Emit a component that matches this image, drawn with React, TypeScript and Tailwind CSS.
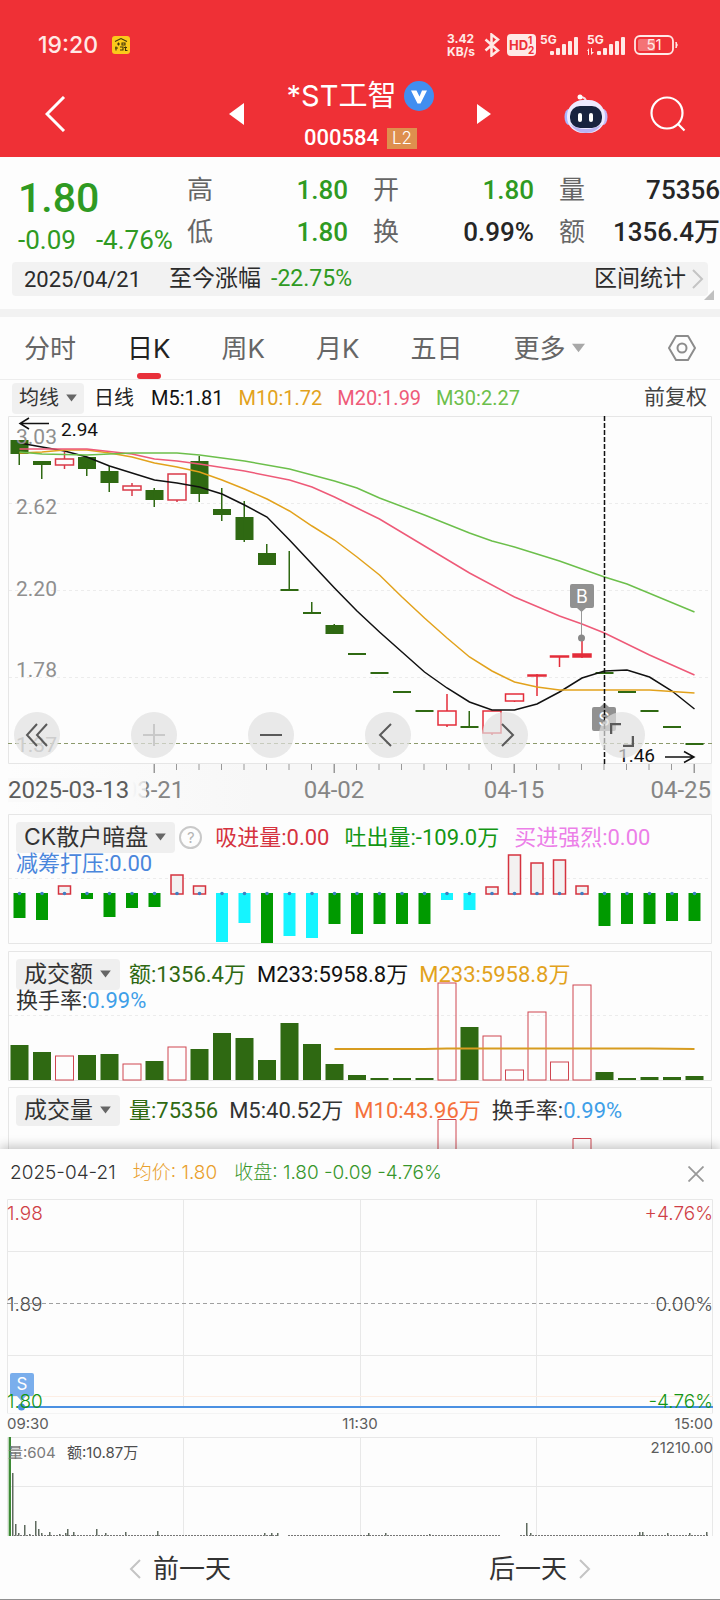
import { useState } from 'react';
import type { ReactNode } from 'react';

const STEP = 22.5;
const cx = (i: number) => 19.5 + STEP * i;

// [direction, body top, body bottom, high, low]
type Candle = ['u' | 'd', number, number, number, number];
const candles: Candle[] = [
  ['d', 24, 38, 24, 49], ['d', 45, 49, 45, 63], ['u', 43, 49, 36, 53], ['d', 41, 53, 41, 60],
  ['d', 55, 67, 50, 76], ['u', 70, 74, 67, 80], ['d', 74, 84, 72, 91], ['u', 58, 84, 58, 86],
  ['d', 45, 78, 40, 86], ['d', 93, 99, 72, 105], ['d', 101, 124, 85, 126], ['d', 137, 149, 128, 149],
  ['d', 173, 175, 135, 174], ['d', 196, 198, 186, 197], ['d', 209, 218, 208, 218], ['d', 237, 239, 238, 238],
  ['d', 256, 258, 257, 257], ['d', 275, 277, 276, 276], ['d', 294, 296, 295, 295], ['u', 295, 309, 278, 311],
  ['d', 310, 312, 295, 311], ['u', 295, 317, 295, 319], ['u', 278, 285, 278, 286], ['u', 259, 260, 258, 280],
  ['u', 240, 241, 240, 251], ['u', 238, 241, 222, 242], ['d', 256, 258, 257, 257], ['d', 275, 277, 276, 276],
  ['d', 294, 296, 295, 295], ['d', 310, 312, 311, 311], ['d', 327, 329, 328, 328],
];

// [index, y]
type Point = [number, number];
const averages: { color: string; points: Point[] }[] = [
  {
    color: '#111111',
    points: [[0, 27], [1, 31], [2, 35], [3, 41], [4, 50], [6, 64], [7, 67], [8, 71], [9, 78], [10, 89], [11, 101], [12, 124], [14, 172],
      [15, 195], [16, 216], [17, 236], [18, 256], [19, 272], [20, 286], [21, 294], [22, 294], [23, 288], [24, 276], [25, 262],
      [26, 255], [27, 254], [28, 261], [29, 275], [30, 293]],
  },
  {
    color: '#e2a21c',
    points: [[0, 37], [1, 36], [2, 34], [3, 34], [4, 37], [5, 41], [6, 47], [7, 51], [8, 56], [9, 64], [10, 73], [11, 83], [12, 95],
      [13, 110], [14, 124], [15, 141], [16, 159], [17, 181], [18, 202], [19, 222], [20, 241], [21, 255], [22, 266], [23, 271],
      [24, 274], [28, 274], [30, 277]],
  },
  {
    color: '#ee5a78',
    points: [[0, 33], [3, 33], [5, 38], [6, 43], [7, 45], [8, 48], [10, 55], [12, 64], [13, 71], [14, 81], [15, 92], [16, 103],
      [18, 130], [20, 157], [22, 181], [24, 200], [25, 208], [26, 217], [28, 239], [30, 259]],
  },
  {
    color: '#6cbf4b',
    points: [[0, 36], [1, 38], [3, 39], [5, 37], [7, 37], [8, 39], [10, 45], [12, 53], [13, 59], [14, 65], [15, 72], [16, 82],
      [18, 99], [20, 117], [21, 125], [22, 131], [24, 145], [26, 161], [27, 168], [30, 196]],
  },
];

const flows: ['g' | 'r' | 'c', number][] = [
  ['g', 104], ['g', 106], ['r', 72], ['g', 85], ['g', 103], ['g', 94], ['g', 93], ['r', 61], ['r', 72], ['c', 128],
  ['c', 109], ['g', 129], ['c', 122], ['c', 124], ['g', 110], ['g', 120], ['g', 110], ['g', 110], ['g', 110], ['c', 86],
  ['c', 96], ['r', 73], ['r', 41], ['r', 49], ['r', 46], ['r', 72], ['g', 112], ['g', 110], ['g', 110], ['g', 107], ['g', 107],
];

const turnover: ['u' | 'd', number][] = [
  ['d', 94], ['d', 101], ['u', 105], ['d', 104], ['d', 103], ['u', 113], ['d', 110], ['u', 96], ['d', 98], ['d', 82],
  ['d', 87], ['d', 109], ['d', 72], ['d', 93], ['d', 113], ['d', 124], ['d', 127], ['d', 127], ['d', 127], ['u', 32],
  ['d', 76], ['u', 85], ['u', 119], ['u', 61], ['u', 111], ['u', 34], ['d', 121], ['d', 127], ['d', 126], ['d', 126], ['d', 125],
];

const minuteSpikes: Point[] = [
  [13, 63], [16, 12], [19, 3], [25, 11], [30, 2], [36, 15], [39, 7], [42, 3], [50, 4], [60, 2], [66, 3], [68, 7], [74, 4],
  [97, 7], [106, 3], [126, 4], [158, 5], [265, 3], [272, 3], [278, 3], [369, 3], [386, 3], [430, 2], [527, 13], [531, 3],
  [640, 4], [643, 4], [668, 3], [690, 3], [707, 4],
];

const DIN = "font-['Roboto','Noto_Sans_CJK_SC',sans-serif]";
const UI = "font-['Inter','Noto_Sans_CJK_SC',sans-serif]";

function Caret({ className }: { className: string }) {
  return <svg viewBox="0 0 12 9" className={className} aria-hidden="true"><path d="M0 0.5h12L6 8.5z" fill="currentColor" /></svg>;
}

function Chevron({ dir, className }: { dir: 'left' | 'right'; className: string }) {
  return (
    <svg viewBox="0 0 12 20" className={className} fill="none" stroke="currentColor" strokeWidth="2" aria-hidden="true">
      <path d={dir === 'left' ? 'M11 1L2 10l9 9' : 'M1 1l9 9-9 9'} />
    </svg>
  );
}

function Signal({ data }: { data?: boolean }) {
  return (
    <svg viewBox="0 0 40 28" className="h-7 w-10" fill="#ffe9e6" aria-hidden="true">
      <text x="0" y="13" className="font-['Inter',sans-serif] text-[12px] font-bold">5G</text>
      {data && <path d="M0 20l2-3v7h-1v-4zM4 17h1v4h2l-3 3z" />}
      <rect x="10" y="20" width="4" height="4" rx="1" />
      <rect x="16" y="17" width="4" height="7" rx="1" />
      <rect x="22" y="13" width="4" height="11" rx="1" />
      <rect x="28" y="10" width="4" height="14" rx="1" />
      <rect x="34" y="6" width="4" height="18" rx="1" />
    </svg>
  );
}

function StatusBar() {
  return (
    <div className="flex h-[68px] items-center pt-[22px] pr-[41px] pl-[38px] text-[#ffe9e6]">
      <span className="text-[23px] font-medium">19:20</span>
      <svg viewBox="0 0 18 18" className="ml-[14px] size-[18px]" aria-hidden="true">
        <rect width="18" height="18" rx="3" fill="#fbc91b" />
        <path d="M3 5.500l6-3 6 3M5 8h3M6.500 6.500v3M10 7h3v2h-3zM3 12h3M4 10.500v4M8 11h3v3H8M12 11.500h3M13.500 10.500v4h2" fill="none" stroke="#43360a" strokeWidth="1.100" />
      </svg>
      <span className="ml-auto w-[34px] text-[12px] leading-[13px] font-bold">3.42<br />KB/s</span>
      <svg viewBox="0 0 16 24" className="ml-[3px] h-6 w-4" fill="none" stroke="#ffe9e6" strokeWidth="2.500" aria-hidden="true">
        <path d="M1.500 6.500l12.500 11-6.500 5V1.500l6.500 5-12.500 11" />
      </svg>
      <svg viewBox="0 0 30 22" className="ml-[7px] h-[22px] w-[30px]" aria-hidden="true">
        <rect width="29" height="22" rx="4" fill="#ffe9e6" />
        <g fill="#ee3035" className="font-['Inter',sans-serif] font-bold">
          <text x="2" y="16" className="text-[13px]">HD</text>
          <text x="21" y="10" className="text-[10px]">1</text>
          <text x="21" y="20" className="text-[10px]">2</text>
        </g>
      </svg>
      <div className="ml-[3px] flex gap-[7px]">
        <Signal />
        <Signal data />
      </div>
      <svg viewBox="0 0 45 20" className="ml-[7px] h-5 w-[45px]" aria-hidden="true">
        <rect x="4" y="4" width="17" height="12" rx="2" fill="#f47375" />
        <rect x="1" y="1" width="38" height="18" rx="5" fill="none" stroke="#ffe9e6" strokeWidth="1.800" />
        <path d="M42 7q2.500 3 0 6z" fill="#ffe9e6" stroke="#ffe9e6" />
        <text x="20" y="15" textAnchor="middle" fill="#ffe9e6" className="font-['Inter',sans-serif] text-[15px]">51</text>
      </svg>
    </div>
  );
}

function Robot() {
  return (
    <svg viewBox="0 0 44 40" className="h-10 w-11" aria-hidden="true">
      <path d="M22 8q0-5-6-5" fill="none" stroke="#f4dfe6" strokeWidth="2" />
      <circle cx="16" cy="3" r="2.500" fill="#fff" />
      <ellipse cx="5" cy="23" rx="4.500" ry="8" fill="#a9b4ff" />
      <ellipse cx="39" cy="23" rx="4.500" ry="8" fill="#c3b8f7" />
      <rect x="3" y="6" width="38" height="33" rx="16" fill="#eeeaff" />
      <path d="M6 30q6 9 16 9t16-9q-6 5-16 5T6 30z" fill="#b9b5f3" />
      <rect x="6" y="12" width="32" height="22" rx="10" fill="#18233f" />
      <rect x="14" y="19" width="4" height="9" rx="2" fill="#fff" />
      <rect x="25" y="19" width="4" height="9" rx="2" fill="#fff" />
    </svg>
  );
}

function NavBar() {
  return (
    <div className="grid h-[89px] grid-cols-[1fr_auto_1fr] pt-[10px] text-white">
      <button aria-label="返回" className="flex h-[72px] items-center pl-[45px]">
        <svg viewBox="0 0 21 36" className="h-9 w-[21px]" fill="none" stroke="currentColor" strokeWidth="3"><path d="M19 1L2 18l17 17" /></svg>
      </button>
      <div className="flex h-[72px] w-[262px] items-center justify-between">
        <button aria-label="上一只">
          <svg viewBox="0 0 15 22" className="h-[22px] w-[15px]" fill="currentColor"><path d="M15 0v22L0 11z" /></svg>
        </button>
        <div className="flex flex-col items-center gap-3">
          <div className="flex items-center gap-2">
            <h1 className="text-[29px] leading-9 whitespace-nowrap">*ST工智</h1>
            <svg viewBox="0 0 30 30" className="size-[30px]" aria-hidden="true">
              <circle cx="15" cy="15" r="15" fill="#418ef0" />
              <path d="M7 9.500h5.500l3 6 2.500-6h5l-6.500 13h-3z" fill="#fff" />
            </svg>
          </div>
          <div className="flex items-center gap-2">
            <span className={`${DIN} text-[22px] leading-6 font-medium`}>000584</span>
            <span className="w-[30px] bg-[#de8f4e] text-center text-[17px] leading-[21px] font-light">L2</span>
          </div>
        </div>
        <button aria-label="下一只">
          <svg viewBox="0 0 14 20" className="h-5 w-[14px]" fill="currentColor"><path d="M0 0v20l14-10z" /></svg>
        </button>
      </div>
      <div className="flex h-[72px] items-center justify-end gap-[42px] pr-[34px]">
        <button aria-label="智能助手"><Robot /></button>
        <button aria-label="搜索">
          <svg viewBox="0 0 36 36" className="size-9" fill="none" stroke="currentColor" strokeWidth="2.200"><circle cx="17" cy="17" r="15.500" /><path d="M27.500 27.500l7 7" /></svg>
        </button>
      </div>
    </div>
  );
}

const quotes = [
  { label: '高', value: '1.80', tone: 'text-[#2f9a22]' },
  { label: '开', value: '1.80', tone: 'text-[#2f9a22]' },
  { label: '量', value: '75356', tone: 'text-[#262626]' },
  { label: '低', value: '1.80', tone: 'text-[#2f9a22]' },
  { label: '换', value: '0.99%', tone: 'text-[#262626]' },
  { label: '额', value: '1356.4万', tone: 'text-[#262626]' },
];

function QuotePanel() {
  return (
    <section className={`${DIN} relative border-b-8 border-[#f2f2f2] pt-[13px] pb-[13px]`}>
      <div className="flex">
        <div className="w-[187px] shrink-0 pt-[6px] pl-[18px] text-[#2f9a22]">
          <div className="text-[41px] leading-[44px] font-medium">1.80</div>
          <div className="mt-[6px] flex gap-5 text-[26px] leading-7">
            <span>-0.09</span>
            <span>-4.76%</span>
          </div>
        </div>
        <dl className="grid flex-1 grid-cols-3 gap-x-[25px] text-[26px] leading-[41px]">
          {quotes.map((q) => (
            <div key={q.label} className="flex justify-between whitespace-nowrap">
              <dt className="text-[#666666]">{q.label}</dt>
              <dd className={`font-medium ${q.tone}`}>{q.value}</dd>
            </div>
          ))}
        </dl>
      </div>
      <div className="mx-3 mt-2 flex h-[34px] items-center rounded bg-[#f2f2f2] pr-1 pl-3 text-[23px] text-[#2b2b2b]">
        <span className="text-[22px]">2025/04/21</span>
        <span className="ml-7">至今涨幅</span>
        <span className="ml-[10px] text-[#2f9a22]">-22.75%</span>
        <button className="ml-auto flex items-center gap-[6px]">
          区间统计
          <Chevron dir="right" className="h-5 w-3 text-[#c4c4c4]" />
        </button>
      </div>
      <svg viewBox="0 0 10 10" className="absolute right-[6px] bottom-[9px] size-[10px]" aria-hidden="true"><path d="M10 0v10H0z" fill="#c0c0c0" /></svg>
    </section>
  );
}

const tabs = ['分时', '日K', '周K', '月K', '五日'];

function PeriodTabs() {
  const [active, setActive] = useState('日K');
  return (
    <nav className="flex h-[63px] items-center gap-[51px] border-b border-[#ededed] px-6 text-[26px] text-[#666666]">
      {tabs.map((t) => (
        <button key={t} onClick={() => setActive(t)}
          className={t === active ? 'relative h-full whitespace-nowrap text-[#222222]' : 'h-full whitespace-nowrap'}>
          {t}
          {t === active && <span className="absolute bottom-0 left-1/2 h-[6px] w-6 -translate-x-1/2 rounded-full bg-[#e8303a]" />}
        </button>
      ))}
      <button className="flex h-full items-center gap-[6px] whitespace-nowrap">更多<Caret className="h-[10px] w-[13px] text-[#a8a8a8]" /></button>
      <button aria-label="设置" className="ml-auto">
        <svg viewBox="0 0 28 28" className="size-7" fill="none" stroke="#8c8c8c" strokeWidth="2"><path d="M8 2h12l7 12-7 12H8L1 14z" strokeLinejoin="round" /><circle cx="14" cy="14" r="4.500" /></svg>
      </button>
    </nav>
  );
}

function AverageLegend() {
  return (
    <div className={`${DIN} flex h-9 items-center pr-[13px] pl-3 text-[20px] whitespace-nowrap`}>
      <button className="flex h-[31px] items-center gap-[7px] rounded bg-[#f0f0f0] px-[7px] text-[20px] text-[#333333]">
        均线<Caret className="h-2 w-[11px] text-[#666666]" />
      </button>
      <span className="ml-[10px] text-[#222222]">日线</span>
      <div className="ml-[17px] flex gap-[15px] text-[20px]">
        <span className="text-[#111111]">M5:1.81</span>
        <span className="text-[#e2a21c]">M10:1.72</span>
        <span className="text-[#ee5a78]">M20:1.99</span>
        <span className="text-[#6cbf4b]">M30:2.27</span>
      </div>
      <button className="ml-auto text-[21px] text-[#444444]">前复权</button>
    </div>
  );
}

function RoundButton({ label, children }: { label: string; children: ReactNode }) {
  return (
    <button aria-label={label} className="flex size-[46px] items-center justify-center rounded-full bg-[#e0e0e0]/70">
      <svg viewBox="0 0 24 24" className="size-6" fill="none" stroke="#5a5a5a" strokeWidth="2">{children}</svg>
    </button>
  );
}

function KLineChart() {
  return (
    <section className="relative">
      <svg viewBox="0 0 720 398" className={`${DIN} block h-auto w-full`} role="img" aria-label="日K线图">
        <defs>
          <linearGradient id="axisFade">
            <stop offset="0" stopColor="#fdfdfd" />
            <stop offset="1" stopColor="#f7f7f7" />
          </linearGradient>
          <linearGradient id="dateFade">
            <stop offset="0.900" stopColor="#fafafa" />
            <stop offset="1" stopColor="#f9f9f9" stopOpacity="0.700" />
          </linearGradient>
        </defs>
        <rect x="8" y="348" width="248" height="50" fill="url(#axisFade)" />
        <rect x="256" y="348" width="456" height="50" fill="#f7f7f7" />
        <path d="M8.500 347.500V.5h703v347z" fill="none" stroke="#e6e6e6" />
        <path d="M9 87.500h702M9 174.500h702M9 261.500h702" stroke="#ececec" strokeDasharray="3 3" />
        <path d="M8 327.500h704" stroke="#8c9a6c" strokeDasharray="4 3" />

        {candles.map(([dir, top, bottom, high, low], i) => {
          const x = cx(i);
          if (dir === 'd') {
            return (
              <g key={i} fill="#2f6912">
                <rect x={x - 9} y={top} width="18" height={bottom - top} />
                {low > high && <rect x={x - 1} y={high} width="1.500" height={low - high} />}
              </g>
            );
          }
          return (
            <g key={i} fill="none" stroke={i < 19 ? '#d93a48' : '#e32d3a'} strokeWidth="1.500">
              <path d={`M${x} ${high}V${top}M${x} ${bottom}V${low}`} />
              <rect x={x - 9} y={top} width="18" height={bottom - top} fill={i === 25 ? '#e32d3a' : 'none'} />
            </g>
          );
        })}
        {averages.map((a) => (
          <polyline key={a.color} points={a.points.map(([i, y]) => `${cx(i)},${y}`).join(' ')} fill="none" stroke={a.color} strokeWidth="1.500" />
        ))}

        <g fill="#8f8f8f" className="text-[21px]">
          <text x="16" y="28">3.03</text>
          <text x="16" y="98">2.62</text>
          <text x="16" y="180">2.20</text>
          <text x="16" y="261">1.78</text>
          <text x="16" y="336" fill="#a0a0a0">1.37</text>
        </g>
        <path d="M49 7.500H20M29 2l-9 5.500 9 5.500" fill="none" stroke="#111" strokeWidth="1.500" />
        <text x="61" y="20" fill="#111" className="text-[19px]">2.94</text>

        <path d="M581.500 193v28" stroke="#999" />
        <circle cx="581.500" cy="222" r="3.500" fill="#888" />
        <path d="M572 168h20q2 0 2 2v20q0 2-2 2h-6l-4.500 4-4.500-4h-5q-2 0-2-2v-20q0-2 2-2z" fill="#919191" />
        <text x="582" y="187" textAnchor="middle" fill="#fff" className="font-['Inter',sans-serif] text-[18px]">B</text>
        <path d="M594 291h6l4.500-4 4.500 4h5q2 0 2 2v20q0 2-2 2h-20q-2 0-2-2v-20q0-2 2-2z" fill="#919191" />
        <text x="604" y="310" textAnchor="middle" fill="#fff" className="font-['Inter',sans-serif] text-[18px]">S</text>
        <path d="M604.500 0v348" stroke="#111" strokeWidth="1.500" strokeDasharray="5 2" />
        <text x="618" y="346" fill="#111" className="text-[19px]">1.46</text>
        <path d="M665 341h29M684 335.500l10 5.500-10 5.500" fill="none" stroke="#111" strokeWidth="1.500" />

        {candles.map((_, i) => i >= 6 && (
          <rect key={i} x={cx(i) - 1} y="348" width={[6, 14, 22, 30].includes(i) ? 1.5 : 1} height={[6, 14, 22, 30].includes(i) ? 9 : 6} fill="#999" />
        ))}
        <g fill="#858585" className="text-[24px]">
          <text x="154" y="382" textAnchor="middle">03-21</text>
          <rect x="8" y="362" width="138" height="24" fill="url(#dateFade)" />
          <text x="8" y="382" fill="#5c5c5c">2025-03-13</text>
          <text x="334" y="382" textAnchor="middle">04-02</text>
          <text x="514" y="382" textAnchor="middle">04-15</text>
          <text x="711" y="382" textAnchor="end">04-25</text>
        </g>
      </svg>
      <div className="absolute top-[296px] right-[75px] left-[14px] flex justify-between">
        <RoundButton label="最早"><path d="M12 1L2 12l10 11M22 1L12 12l10 11" /></RoundButton>
        <RoundButton label="放大"><path d="M1 12h22M12 1v22" stroke="#c9c9c9" /></RoundButton>
        <RoundButton label="缩小"><path d="M1 12h22" /></RoundButton>
        <RoundButton label="左移"><path d="M15 1L4 12l11 11" /></RoundButton>
        <RoundButton label="右移"><path d="M9 1l11 11L9 23" /></RoundButton>
        <RoundButton label="全屏"><path d="M1 11V1h10M23 13v10H13" strokeWidth="2.500" /></RoundButton>
      </div>
    </section>
  );
}

function Indicator({ name, help, chart, children, extra }: { name: string; help?: boolean; chart: ReactNode; children: ReactNode; extra?: ReactNode }) {
  return (
    <section className="relative">
      {chart}
      <div className={`${DIN} absolute inset-x-0 top-0 pt-2 pl-4 text-[22px] whitespace-nowrap`}>
        <div className="flex h-[30px] items-center">
          <button className={`${UI} flex h-[31px] items-center gap-[7px] rounded bg-[#efefef] pr-[9px] pl-2 text-[23px] text-[#333333]`}>
            {name}<Caret className="h-2 w-[11px] text-[#666666]" />
          </button>
          {help && (
            <button aria-label="说明" className={`${UI} ml-1 size-[23px] rounded-full border-2 border-[#c9c9c9] text-center text-[15px] leading-[19px] text-[#b5b5b5]`}>?</button>
          )}
          <div className={help ? 'ml-[13px] flex gap-[15px]' : 'ml-[9px] flex gap-[11px]'}>{children}</div>
        </div>
        <div className="leading-[24px]">{extra}</div>
      </div>
    </section>
  );
}

function PanelFrame({ bottom }: { bottom: number }) {
  return <path d={`M8.500 ${bottom}V.5h703V${bottom}z`} fill="none" stroke="#e6e6e6" />;
}

const FLOW_COLORS = { g: '#009a00', c: '#15f4ff', r: '#d5333f' };

function FlowChart() {
  return (
    <svg viewBox="0 0 720 137" className="block h-auto w-full" role="img" aria-label="CK散户暗盘">
      <PanelFrame bottom={129.5} />
      <path d="M9 64.500h702" stroke="#ececec" strokeDasharray="3 3" />
      {flows.map(([kind, y], i) => {
        const x = cx(i) - 6;
        return (
          <g key={i}>
            {kind === 'r'
              ? <rect x={x} y={y} width="12" height={80 - y} fill="#f3f1f1" stroke={FLOW_COLORS.r} strokeWidth="1.500" />
              : <rect x={x} y="79" width="12" height={y - 79} fill={FLOW_COLORS[kind]} />}
            <circle cx={cx(i)} cy="79.500" r="1.800" fill="#3d7fc4" />
          </g>
        );
      })}
    </svg>
  );
}

function VolumeBars({ data, baseline }: { data: ['u' | 'd', number][]; baseline: number }) {
  return data.map(([dir, y], i) => dir === 'd'
    ? <rect key={i} x={cx(i) - 9} y={y} width="18" height={baseline - y} fill="#2f6912" />
    : <rect key={i} x={cx(i) - 9} y={y} width="18" height={baseline - y} fill="none" stroke="#cf4651" />);
}

function TurnoverChart() {
  return (
    <svg viewBox="0 0 720 136" className="block h-auto w-full" role="img" aria-label="成交额">
      <PanelFrame bottom={129.5} />
      <path d="M9 64.500h702" stroke="#ececec" strokeDasharray="3 3" />
      <VolumeBars data={turnover} baseline={129} />
      <path d={`M${cx(14)} 98H${cx(18)}L${cx(19)} 97.500H${cx(28)}L${cx(30)} 98`} fill="none" stroke="#d79c20" strokeWidth="2" />
    </svg>
  );
}

function VolumeChart() {
  return (
    <svg viewBox="0 0 720 62" className="block h-auto w-full" role="img" aria-label="成交量">
      <PanelFrame bottom={70} />
      <path d={`M${cx(19) - 9} 70V32.500h18V70M${cx(25) - 9} 70V51.500h18V70`} fill="none" stroke="#cf4651" />
    </svg>
  );
}

function IntradayChart() {
  return (
    <svg viewBox="0 0 720 337" className={`${UI} block h-auto w-full`} role="img" aria-label="分时图">
      <path d="M7.500 214V.5h705V214M7 52.500h706M7 156.500h706M183.500 1v208M360.500 1v208M536.500 1v208" fill="none" stroke="#e8e8e8" />
      <path d="M7 214.500h706" stroke="#f4f4f4" />
      <path d="M7 104.500h706" stroke="#a0a0a0" strokeDasharray="4 3" />
      <path d="M7 197.500h706" stroke="#fdeee4" />
      <path d="M12 174h20q2 0 2 2v19q0 2-2 2h-6l-4.500 5-4.500-5h-5q-2 0-2-2v-19q0-2 2-2z" fill="#7aaeec" />
      <text x="22" y="191" textAnchor="middle" fill="#fff" className="text-[17px]">S</text>
      <circle cx="21.500" cy="208" r="3.500" fill="#4a90e2" />
      <path d="M20 208h693" stroke="#4a90e2" strokeWidth="2" />
      <g className="text-[19px] font-light">
        <text x="7" y="21" fill="#cf3f46">1.98</text>
        <text x="713" y="21" textAnchor="end" fill="#cf3f46">+4.76%</text>
        <text x="7" y="112" fill="#4d4d4d">1.89</text>
        <text x="713" y="112" textAnchor="end" fill="#4d4d4d">0.00%</text>
        <text x="7" y="209" fill="#149614">1.80</text>
        <text x="713" y="209" textAnchor="end" fill="#149614">-4.76%</text>
      </g>
      <g className="text-[15px]" fill="#5c5c5c">
        <text x="7" y="230">09:30</text>
        <text x="360" y="230" textAnchor="middle">11:30</text>
        <text x="713" y="230" textAnchor="end">15:00</text>
      </g>

      <path d="M7.500 337v-98.500h705V337M7 287.500h706M183.500 239v98M360.500 239v98M536.500 239v98" fill="none" stroke="#e8e8e8" />
      <rect x="8" y="238" width="1" height="99" fill="#b9d8b4" />
      <rect x="9" y="238" width="2" height="99" fill="#3d8a35" />
      {minuteSpikes.map(([x, h]) => <rect key={x} x={x - 1} y={337 - h} width="1.500" height={h} fill="#5f6b5f" />)}
      <path d="M14 336.500h264M288 336.500h212M520 336.500h188" stroke="#777" strokeDasharray="2 1" />
      <g className="text-[15px]">
        <text x="8" y="259" fill="#7a7a7a">量:604</text>
        <text x="67" y="259" fill="#4d4d4d">额:10.87万</text>
        <text x="713" y="254" textAnchor="end" fill="#5c5c5c">21210.00</text>
      </g>
    </svg>
  );
}

function DaySheet() {
  return (
    <section className="relative border-b border-[#8f8f8f] bg-[#fdfdfd] shadow-[0_-3px_10px_rgba(0,0,0,0.22)]">
      <header className="flex h-[50px] items-center gap-[17px] pr-4 pb-[1px] pl-[10px] text-[19px] font-light whitespace-nowrap">
        <span className="text-[#333333]">2025-04-21</span>
        <span className="text-[#e9a02c]">均价: 1.80</span>
        <span className="text-[#37962b]">收盘: 1.80 -0.09 -4.76%</span>
        <button aria-label="关闭" className="ml-auto">
          <svg viewBox="0 0 16 16" className="size-4" stroke="#999" strokeWidth="1.800"><path d="M.5.5l15 15M15.500.5l-15 15" /></svg>
        </button>
      </header>
      <IntradayChart />
      <footer className="flex h-[63px] pt-[2px] text-[26px] text-[#333333]">
        <button className="flex flex-1 items-center justify-center gap-3"><Chevron dir="left" className="h-5 w-3 text-[#c4c4c4]" />前一天</button>
        <button className="flex flex-1 items-center justify-center gap-3">后一天<Chevron dir="right" className="h-5 w-3 text-[#c4c4c4]" /></button>
      </footer>
    </section>
  );
}

export default function App() {
  return (
    <div className={`${UI} w-full overflow-hidden bg-[#fdfdfd]`}>
      <header className="bg-[#ef3036]">
        <StatusBar />
        <NavBar />
      </header>
      <main>
        <QuotePanel />
        <PeriodTabs />
        <AverageLegend />
        <KLineChart />
        <Indicator name="CK散户暗盘" help chart={<FlowChart />} extra={<span className="text-[#4a86dc]">减筹打压:0.00</span>}>
          <span className="text-[#d5333f]">吸进量:0.00</span>
          <span className="text-[#149614]">吐出量:-109.0万</span>
          <span className="text-[#ec7fe8]">买进强烈:0.00</span>
        </Indicator>
        <Indicator name="成交额" chart={<TurnoverChart />} extra={<span className="text-[#333333]">换手率:<span className="text-[#3f9fe8]">0.99%</span></span>}>
          <span className="text-[#2f6912]">额:1356.4万</span>
          <span className="text-[#111111]">M233:5958.8万</span>
          <span className="text-[#e2a21c]">M233:5958.8万</span>
        </Indicator>
        <Indicator name="成交量" chart={<VolumeChart />}>
          <span className="text-[#2f6912]">量:75356</span>
          <span className="text-[#333333]">M5:40.52万</span>
          <span className="text-[#f5713c]">M10:43.96万</span>
          <span className="text-[#333333]">换手率:<span className="text-[#3f9fe8]">0.99%</span></span>
        </Indicator>
        <DaySheet />
      </main>
    </div>
  );
}
